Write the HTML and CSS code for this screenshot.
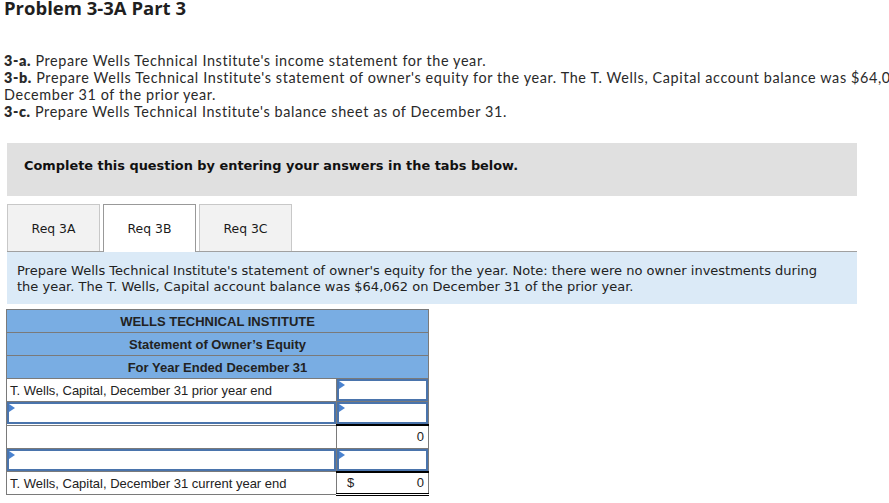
FILE: index.html
```html
<!DOCTYPE html>
<html>
<head>
<meta charset="utf-8">
<link rel="stylesheet" href="styles.css">
</head>
<body>
<h1 class="title">Problem 3-3A Part 3</h1>
<div class="reqs">
  <p><b>3-a.</b> Prepare Wells Technical Institute's income statement for the year.</p>
  <p><b>3-b.</b> Prepare Wells Technical Institute's statement of owner's equity for the year. The T. Wells, Capital account balance was $64,062 on December 31 of the prior year.</p>
  <p><b>3-c.</b> Prepare Wells Technical Institute's balance sheet as of December 31.</p>
</div>
<div class="notice">Complete this question by entering your answers in the tabs below.</div>
<div class="tabs">
  <div class="tab">Req 3A</div>
  <div class="tab active">Req 3B</div>
  <div class="tab">Req 3C</div>
</div>
<div class="info">Prepare Wells Technical Institute's statement of owner's equity for the year. Note: there were no owner investments during the year. The T. Wells, Capital account balance was $64,062 on December 31 of the prior year.</div>
<table class="stmt">
  <colgroup><col class="c1"><col class="c2"></colgroup>
  <tr><th colspan="2">WELLS TECHNICAL INSTITUTE</th></tr>
  <tr><th colspan="2">Statement of Owner’s Equity</th></tr>
  <tr><th colspan="2">For Year Ended December 31</th></tr>
  <tr><td class="lbl">T. Wells, Capital, December 31 prior year end</td><td class="val"><div class="inp"></div></td></tr>
  <tr><td class="lbl inpcell"><div class="inp"></div></td><td class="val"><div class="inp"></div></td></tr>
  <tr><td class="lbl"></td><td class="val sub"><span class="num">0</span></td></tr>
  <tr><td class="lbl inpcell"><div class="inp"></div></td><td class="val"><div class="inp"></div></td></tr>
  <tr><td class="lbl last">T. Wells, Capital, December 31 current year end</td><td class="val sub total"><span class="cur">$</span><span class="num">0</span></td></tr>
</table>
</body>
</html>
```
FILE: styles.css
```css
html, body { margin: 0; padding: 0; background: #fff; }
body { padding: 0 4px; color: #2b2b2b; overflow: hidden; }
.title {
  font-family: "Open Sans", "Lato", sans-serif;
  font-weight: 700;
  font-size: 18.5px;
  line-height: 18px;
  margin: -1px 0 0;
  color: #1f1f1f;
  letter-spacing: 0;
}
.reqs {
  width: 950px;
  margin-top: 35px;
  font-family: "Lato", "Open Sans", sans-serif;
  font-size: 14.4px;
  line-height: 17px;
  color: #2a2a2a;
  letter-spacing: 0.62px;
}
.reqs p { margin: 0; }
.reqs b { font-weight: 800; }
.notice {
  margin: 23px 0 0 3px;
  width: 850px;
  height: 53px;
  box-sizing: border-box;
  background: #e0e0e0;
  padding: 15px 17px 0;
  font-family: "DejaVu Sans", Verdana, sans-serif;
  font-weight: bold;
  font-size: 12.9px;
  color: #111;
}
.tabs {
  margin: 8px 0 0 3px;
  width: 850px;
  display: flex;
  gap: 3px;
  height: 47px;
  border-bottom: 1px solid #a0a0a0;
}
.tab {
  width: 93px;
  box-sizing: border-box;
  border: 1px solid #c8c8c8;
  border-bottom: none;
  background: #f2f2f2;
  display: flex;
  align-items: center;
  justify-content: center;
  font-family: "DejaVu Sans", Verdana, sans-serif;
  font-size: 12.4px;
  color: #1a1a1a;
}
.tab.active {
  background: #fff;
  border-color: #999;
  height: 48px;
  position: relative;
  z-index: 1;
}
.info {
  margin: 0 0 0 3px;
  width: 850px;
  background: #dbeaf7;
  height: 52px;
  box-sizing: border-box;
  padding: 11px 30px 0 10px;
  font-family: "DejaVu Sans", Verdana, sans-serif;
  font-size: 13px;
  line-height: 16px;
  color: #222;
}
.stmt {
  margin: 5px 0 0 2px;
  border-collapse: collapse;
  table-layout: fixed;
  width: 422px;
  font-family: "Liberation Sans", Arial, sans-serif;
  font-size: 13px;
  color: #222;
}
.stmt col.c1 { width: 330px; }
.stmt col.c2 { width: 92px; }
.stmt th, .stmt td {
  border: 1px solid #7a7a7a;
  height: 22px;
  padding: 0;
}
.stmt th { background: #79ade3; font-weight: bold; text-align: center; }
.stmt td.lbl { padding-left: 3px; }
.stmt td.inpcell { padding-left: 0; }
.inp {
  height: 22px;
  box-sizing: border-box;
  border: 2px solid #4a74ac;
  position: relative;
}
.inp::before {
  content: "";
  position: absolute;
  left: 0;
  top: 0;
  border-top: 4px solid transparent;
  border-bottom: 4px solid transparent;
  border-left: 6px solid #4a82cf;
}
.stmt td.sub { border-top: 2px solid #000; text-align: right; padding-right: 4px; height: 21px; }
.stmt td.total { border-bottom: 3px double #000; height: 20px; }
.num { display: inline-block; }
.cur { float: left; padding-left: 10px; }
```
